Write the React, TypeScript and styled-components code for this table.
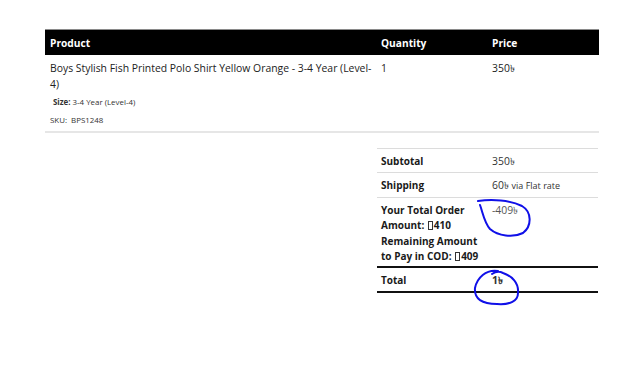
import React from 'react';
import styled, { createGlobalStyle } from 'styled-components';

const GlobalStyle = createGlobalStyle`
  html, body {
    margin: 0;
    padding: 0;
    background: #fff;
  }
  body {
    width: 640px;
    height: 372px;
    overflow: hidden;
    font-family: 'Open Sans', 'Noto Sans', 'DejaVu Sans', sans-serif;
    color: #222;
  }
`;

const Page = styled.div`
  position: relative;
  padding: 29px 0 0 45px;
  width: 640px;
  height: 372px;
  box-sizing: border-box;
`;

const OrderTable = styled.div`
  width: 554px;
`;

const Row = styled.div`
  display: grid;
  grid-template-columns: 331px 111px 112px;
`;

const HeadRow = styled(Row)`
  height: 25px;
  align-items: center;
  background: #000;
  border-top: 1px solid #8a8a8a;
  color: #fff;
  font-size: 10.2px;
  font-weight: 700;
`;

const HeadCell = styled.div`
  padding: 0 5px;
`;

const ItemRow = styled(Row)`
  padding: 5px 0 5px;
  border-bottom: 2px solid #e6e6e6;
  font-size: 10.4px;
  line-height: 16px;
`;

const Cell = styled.div<{ $wide?: boolean }>`
  padding: ${({ $wide }) => ($wide ? '0 2px 0 5px' : '0 5px')};
`;

const Meta = styled.div<{ $gap: number; $indent?: number }>`
  margin-top: ${({ $gap }) => $gap}px;
  padding-left: ${({ $indent = 0 }) => $indent}px;
  font-size: 7.9px;
  line-height: 12px;
  color: #333;
  b {
    font-weight: 700;
  }
`;

const Totals = styled.div`
  margin: 15px 0 0 332px;
  width: 221px;
  border-top: 1px solid #dcdcdc;
`;

const TotalsRow = styled.div<{ $strong?: boolean }>`
  display: grid;
  grid-template-columns: 110px 1fr;
  border-bottom: ${({ $strong }) => ($strong ? '2px solid #111' : '1px solid #dcdcdc')};
`;

const Label = styled.div<{ $tall?: boolean }>`
  padding: ${({ $tall }) => ($tall ? '5px 2px 1px 4px' : '4px 4px 3px 4px')};
  font-size: 10px;
  font-weight: 700;
  line-height: ${({ $tall }) => ($tall ? '15.4px' : '16px')};
  color: #1a1a1a;
`;

const Value = styled.div<{ $bold?: boolean; $muted?: boolean }>`
  padding: 4px 5px 3px;
  font-size: 10.4px;
  line-height: 16px;
  font-weight: ${({ $bold }) => ($bold ? 700 : 400)};
  color: ${({ $muted }) => ($muted ? '#555' : '#333')};
`;

const Small = styled.span`
  font-size: 9px;
`;

const Tofu = styled.span`
  display: inline-block;
  width: 5px;
  height: 9px;
  margin: 0 1px;
  border: 1px solid #333;
  box-sizing: border-box;
  vertical-align: -1px;
`;

const Marks = styled.svg`
  position: absolute;
  left: 0;
  top: 0;
  pointer-events: none;
`;

const TK = '\u09F3';

export default function App() {
  return (
    <>
      <GlobalStyle />
      <Page>
        <OrderTable>
          <HeadRow>
            <HeadCell>Product</HeadCell>
            <HeadCell>Quantity</HeadCell>
            <HeadCell>Price</HeadCell>
          </HeadRow>
          <ItemRow>
            <Cell $wide>
              Boys Stylish Fish Printed Polo Shirt Yellow Orange - 3-4 Year (Level-4)
              <Meta $gap={4} $indent={3}>
                <b>Size:</b> 3-4 Year (Level-4)
              </Meta>
              <Meta $gap={6}>SKU:&nbsp; BPS1248</Meta>
            </Cell>
            <Cell>1</Cell>
            <Cell>350{TK}</Cell>
          </ItemRow>
        </OrderTable>

        <Totals>
          <TotalsRow>
            <Label>Subtotal</Label>
            <Value>350{TK}</Value>
          </TotalsRow>
          <TotalsRow>
            <Label>Shipping</Label>
            <Value>
              60{TK} <Small>via Flat rate</Small>
            </Value>
          </TotalsRow>
          <TotalsRow $strong>
            <Label $tall>
              Your Total Order Amount: <Tofu />410 Remaining Amount to Pay in COD: <Tofu />409
            </Label>
            <Value $muted>-409{TK}</Value>
          </TotalsRow>
          <TotalsRow $strong>
            <Label>Total</Label>
            <Value $bold>1{TK}</Value>
          </TotalsRow>
        </Totals>

        <Marks width="640" height="372" viewBox="0 0 640 372">
          <g fill="none" stroke="#1010e8" strokeWidth="2" strokeLinecap="round">
            <path d="M478 201 C492 199 510 200 522 206 C532 212 532 226 523 233 C513 238 498 236 490 229 C484 222 483 213 480 205" />
            <path d="M498 271 C486 269 477 278 475 288 C474 299 482 304 497 304 C510 305 518 301 518 293 C519 283 512 276 503 273 C499 271 495 272 492 274" />
          </g>
        </Marks>
      </Page>
    </>
  );
}
